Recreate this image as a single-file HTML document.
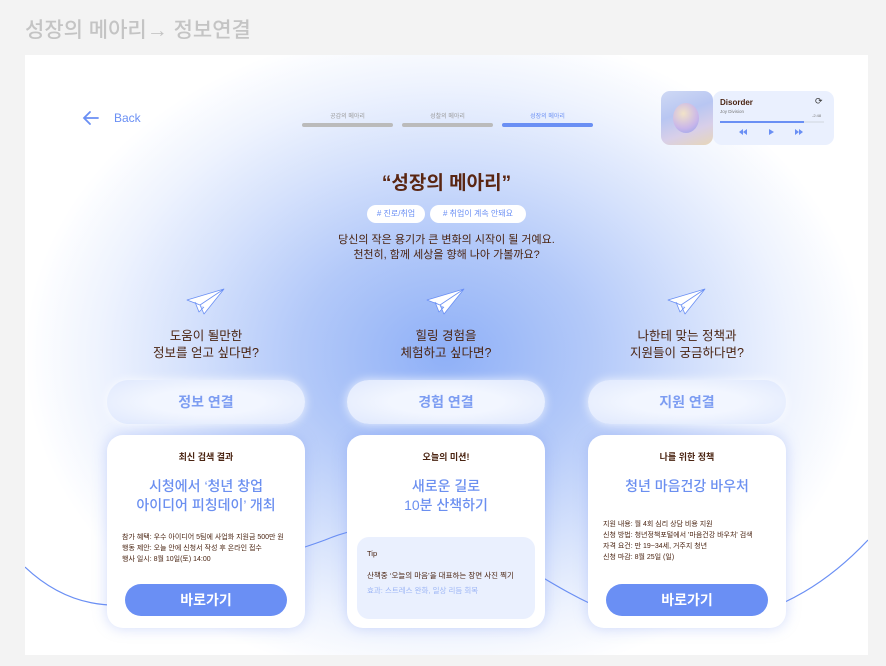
<!DOCTYPE html>
<html><head><meta charset="utf-8"><style>
*{margin:0;padding:0;box-sizing:border-box}
body{width:886px;height:666px;background:#f3f3f3;font-family:"Liberation Sans","Noto Sans CJK KR",sans-serif;position:relative;overflow:hidden;color:#5a2e1a}
.h{position:absolute;left:25px;top:14px;font-size:21px;color:#c4c4c4;font-weight:500}
.frame{position:absolute;left:25px;top:55px;width:843px;height:600px;background:#fff;overflow:hidden}
.glow{position:absolute;left:0;top:0;width:843px;height:600px;background:radial-gradient(ellipse 420px 330px at 420px 300px,#8fb0f7 0%,#b3c9f9 35%,#d6e2fc 62%,#eef3fe 82%,rgba(255,255,255,0) 100%)}
.a{position:absolute}
.c{text-align:center}
.pill{position:absolute;top:325px;width:198px;height:44px;border-radius:22px;background:radial-gradient(ellipse at center,#f2f6ff 40%,#dfe8fd 100%);box-shadow:0 0 10px rgba(255,255,255,.8);color:#7d9df2;font-weight:bold;font-size:14px;text-align:center;line-height:44px}
.card{position:absolute;top:380px;width:198px;height:193px;border-radius:16px;background:#fff;box-shadow:0 0 14px rgba(120,150,240,.35);text-align:center}
.ct{font-size:9px;font-weight:bold;color:#4a2412;margin-top:15px}
.cb{font-size:14px;color:#6b8ff0;margin-top:14px;line-height:19px;font-weight:500}
.cd{font-size:7px;text-align:left;padding-left:15px;line-height:11px;color:#4a2412}
.btn{position:absolute;left:18px;bottom:12px;width:162px;height:32px;border-radius:16px;background:#6a8ff4;color:#fff;font-weight:bold;font-size:14px;line-height:32px}
.q{position:absolute;top:273px;width:198px;text-align:center;font-size:12.5px;line-height:17px;color:#4a2412}
.bar{position:absolute;top:68px;height:4px;border-radius:2px;width:91px}
.bl{position:absolute;top:56px;font-size:6px;color:#999;width:91px;text-align:center}
</style></head><body>
<div class="h">성장의 메아리→ 정보연결</div>
<div class="frame">
<div class="glow"></div>
<svg class="a" style="left:0;top:0" width="843" height="600"><path d="M0 512 C40 550,90 560,140 540 C200 515,260 500,300 485 C360 460,420 470,480 500 C540 535,600 580,680 570 C760 560,810 520,843 485" fill="none" stroke="#6a8ff4" stroke-width="1.2"/></svg>
<svg class="a" style="left:57px;top:55px" width="18" height="16"><path d="M16 8H2M8 2L2 8l6 6" fill="none" stroke="#6a8ff4" stroke-width="1.8" stroke-linecap="round"/></svg>
<div class="a" style="left:89px;top:56px;font-size:12px;color:#6a8ff4">Back</div>
<div class="bl" style="left:277px">공감의 메아리</div><div class="bar" style="left:277px;background:#bbb"></div>
<div class="bl" style="left:377px">성찰의 메아리</div><div class="bar" style="left:377px;background:#bbb"></div>
<div class="bl" style="left:477px;color:#6a8ff4">성장의 메아리</div><div class="bar" style="left:477px;background:#6a8ff4"></div>
<div class="a" style="left:636px;top:36px;width:52px;height:54px;border-radius:9px;background:linear-gradient(160deg,#cfd9f4,#b8c6f2 40%,#d8cfe9 70%,#e7d6b8)"></div>
<div class="a" style="left:648px;top:48px;width:26px;height:30px;border-radius:50%;background:radial-gradient(circle at 40% 35%,#f2e3c8,#c9b6ea 60%,#8fa3ea)"></div>
<div class="a" style="left:688px;top:36px;width:121px;height:54px;border-radius:9px;background:#eaf0fe"></div>
<div class="a" style="left:695px;top:43px;font-size:8px;font-weight:bold;color:#4a2412">Disorder</div>
<div class="a" style="left:695px;top:54px;font-size:4.5px;color:#777">Joy Division</div>
<div class="a" style="left:790px;top:41px;font-size:9px;color:#333">⟳</div>
<div class="a" style="left:787px;top:58px;font-size:4px;color:#777">-2:48</div>
<div class="a" style="left:695px;top:66px;width:104px;height:2px;background:#dde3ee"></div>
<div class="a" style="left:695px;top:66px;width:84px;height:2px;background:#6a8ff4"></div>
<svg class="a" style="left:714px;top:73px" width="80" height="8" fill="#6a8ff4"><path d="M0 4 4 1V7Z M4 4 8 1V7Z M30 1 35 4 30 7Z M56 1 60 4 56 7Z M60 1 64 4 60 7Z"/></svg>
<div class="a c" style="left:0;width:843px;top:113px;font-size:19px;font-weight:bold;color:#5a2612">“성장의 메아리”</div>
<div class="a" style="left:342px;top:150px;width:58px;height:18px;border-radius:9px;background:#fff;font-size:8px;color:#6a8ff4;text-align:center;line-height:18px"># 진로/취업</div>
<div class="a" style="left:405px;top:150px;width:96px;height:18px;border-radius:9px;background:#fff;font-size:8px;color:#6a8ff4;text-align:center;line-height:18px"># 취업이 계속 안돼요</div>
<div class="a c" style="left:0;width:843px;top:178px;font-size:11px;line-height:15px;color:#4a2412">당신의 작은 용기가 큰 변화의 시작이 될 거예요.<br>천천히, 함께 세상을 향해 나아 가볼까요?</div>
<svg class="a" style="left:161px;top:233px" width="40" height="28"><path d="M1 12L38 1 18 26 14 17Z M14 17L38 1 M9 14 13 24 18 19" fill="#fff" stroke="#6a8ff4" stroke-width=".8" stroke-linejoin="round"/></svg>
<svg class="a" style="left:401px;top:233px" width="40" height="28"><path d="M1 12L38 1 18 26 14 17Z M14 17L38 1 M9 14 13 24 18 19" fill="#fff" stroke="#6a8ff4" stroke-width=".8" stroke-linejoin="round"/></svg>
<svg class="a" style="left:642px;top:233px" width="40" height="28"><path d="M1 12L38 1 18 26 14 17Z M14 17L38 1 M9 14 13 24 18 19" fill="#fff" stroke="#6a8ff4" stroke-width=".8" stroke-linejoin="round"/></svg>
<div class="q" style="left:82px">도움이 될만한<br>정보를 얻고 싶다면?</div>
<div class="q" style="left:322px">힐링 경험을<br>체험하고 싶다면?</div>
<div class="q" style="left:563px">나한테 맞는 정책과<br>지원들이 궁금하다면?</div>
<div class="pill" style="left:82px">정보 연결</div>
<div class="pill" style="left:322px">경험 연결</div>
<div class="pill" style="left:563px">지원 연결</div>
<div class="card" style="left:82px"><div class="ct">최신 검색 결과</div><div class="cb">시청에서 ‘청년 창업<br>아이디어 피칭데이’ 개최</div><div class="cd" style="margin-top:17px">참가 혜택: 우수 아이디어 5팀에 사업화 지원금 500만 원<br>행동 제안: 오늘 안에 신청서 작성 후 온라인 접수<br>행사 일시: 8월 10일(토) 14:00</div><div class="btn">바로가기</div></div>
<div class="card" style="left:322px"><div class="ct">오늘의 미션!</div><div class="cb">새로운 길로<br>10분 산책하기</div><div class="a" style="left:10px;top:102px;width:178px;height:82px;border-radius:12px;background:#eaf0fe;text-align:left;padding:12px 10px;font-size:7.5px;color:#4a2412">Tip<div style="margin-top:12px">산책중 ‘오늘의 마음’을 대표하는 장면 사진 찍기</div><div style="color:#9db6f5;margin-top:4px">효과: 스트레스 완화, 일상 리듬 회복</div></div></div>
<div class="card" style="left:563px"><div class="ct">나를 위한 정책</div><div class="cb">청년 마음건강 바우처</div><div class="cd" style="margin-top:23px">지원 내용: 월 4회 심리 상담 비용 지원<br>신청 방법: 청년정책포털에서 '마음건강 바우처' 검색<br>자격 요건: 만 19~34세, 거주지 청년<br>신청 마감: 8월 25일 (일)</div><div class="btn">바로가기</div></div>
</div>
</body></html>
